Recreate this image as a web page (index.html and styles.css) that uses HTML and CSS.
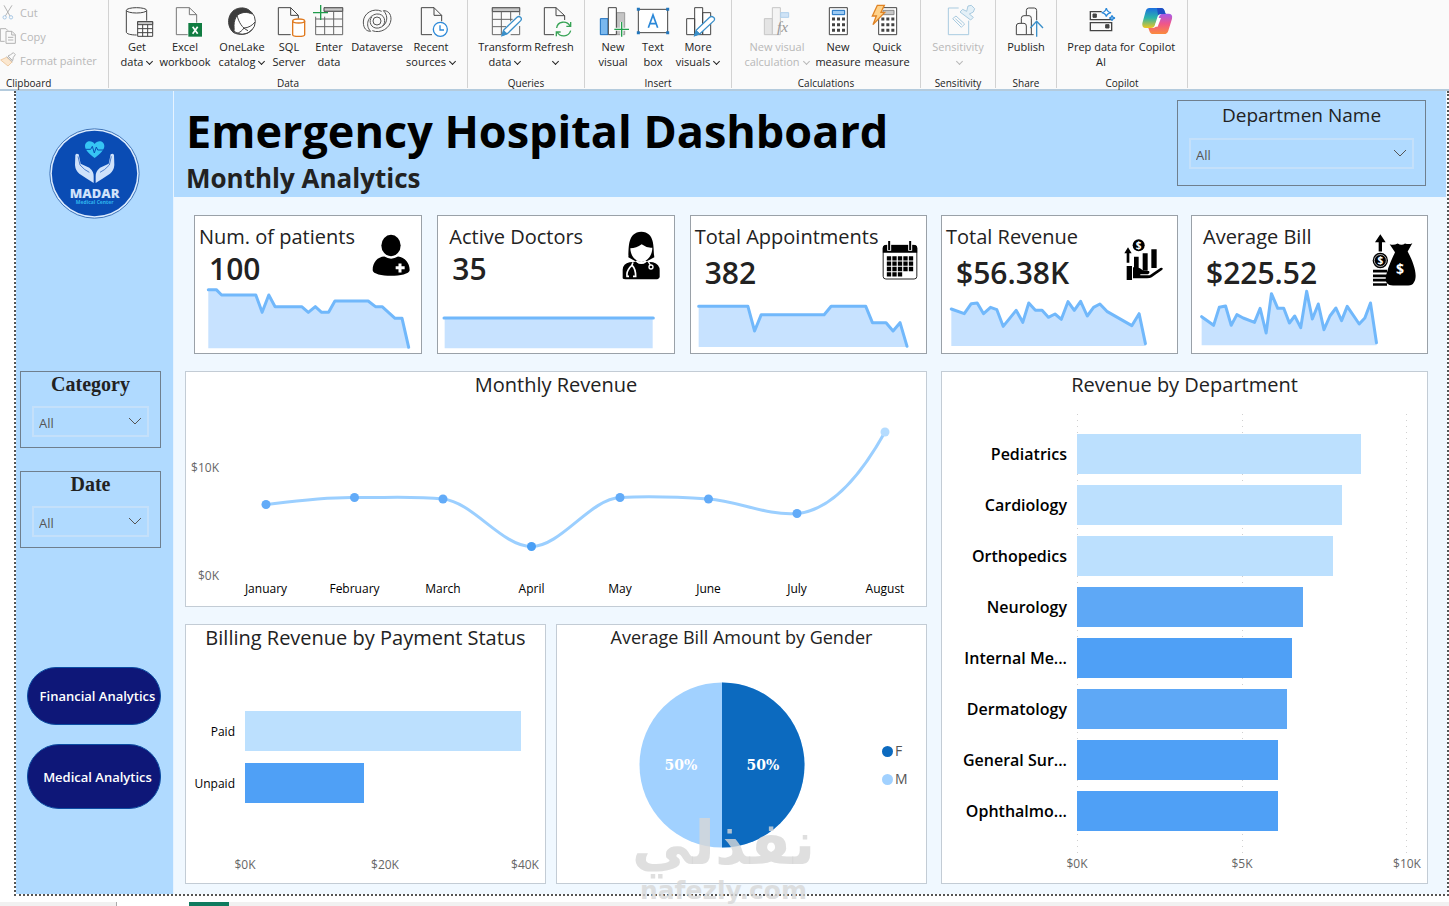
FILE: index.html
```html
<!DOCTYPE html>
<html lang="en">
<head>
<meta charset="utf-8">
<meta name="viewport" content="width=device-width, initial-scale=1">
<title>Emergency Hospital Dashboard</title>
<link rel="stylesheet" href="styles.css">
</head>
<body>
<nav class="ribbon" aria-label="Ribbon">
  <section class="group group--clip">
    <div class="clip-list">
      <button class="clip" disabled><svg class="clip-icon" viewBox="0 12 48 48"><path d="M12 16 30 48M36 16 16 48" stroke="#b3b3b3" stroke-width="3"/><circle cx="14" cy="52" r="5" stroke="#a9c9e6" stroke-width="3"/><circle cx="33" cy="52" r="5" stroke="#a9c9e6" stroke-width="3"/></svg>Cut</button>
      <button class="clip" disabled><svg class="clip-icon" viewBox="0 84 48 48"><path d="M14 124H1V86H18L24 92M18 94H36L46 104V130H18ZM35 94V105H46M24 112H40M24 120H40" stroke="#b3b3b3" stroke-width="3"/></svg>Copy</button>
      <button class="clip" disabled><svg class="clip-icon" viewBox="0 156 48 48"><path d="M2 180 20 172 36 186 24 198Z" fill="#fbe7cf" stroke="#eecba4" stroke-width="3"/><path d="M20 170 38 186M24 168 32 164 40 158 46 164 40 172 38 182Z" stroke="#b3b3b3" stroke-width="3"/></svg>Format painter</button>
    </div>
    <h2 class="group-name group-name--left">Clipboard</h2>
  </section>

  <section class="group">
    <div class="tools">
      <button class="tool w38"><svg class="tool-icon" viewBox="363 18 96 96"><path d="M379 32V96C379 102 393 105 410 105M440 32V62" /><ellipse cx="409.500" cy="31" rx="30.500" ry="8"/><path d="M413 65H458V109H413Z" fill="#fff"/><path d="M413 65H458V74H413Z" fill="#c8c8c8"/><path d="M413 86H458M413 98H458M428 74V109M443 74V109"/></svg><span>Get<br>data<i class="caret"></i></span></button>
      <button class="tool w58"><svg class="tool-icon" viewBox="507 18 96 96"><path d="M563 104H529V23H568L590 44V68M568 23V44H590" stroke="#777"/><path d="M565 69H606V110H565Z" fill="#107c41" stroke="none"/><path d="M578 80 593 101M593 80 578 101" stroke="#fff" stroke-width="5"/></svg><span>Excel<br>workbook</span></button>
      <button class="tool w56"><svg class="tool-icon" viewBox="678 18 96 96"><circle cx="727" cy="64" r="39" fill="#fff"/><path d="M712 26C684 34 676 76 700 97C704 90 702 84 702 76C702 64 706 54 712 46C728 34 742 36 757 42C748 26 730 20 712 26Z" fill="#3c3c3c"/><path d="M700 97C716 104 726 92 732 84C744 84 758 76 765 66M711 46C716 66 726 84 744 92M700 97C718 108 744 104 756 88"/></svg><span>OneLake<br>catalog<i class="caret"></i></span></button>
      <button class="tool w38"><svg class="tool-icon" viewBox="819 18 96 96"><path d="M872 104H835V23H872L895 46V56M872 23V46H895"/><path d="M878 63V104C878 111 914 111 914 104V63" fill="#fff" stroke="#e07a1f" stroke-width="4"/><ellipse cx="896" cy="63" rx="18" ry="6" fill="#fff" stroke="#e07a1f" stroke-width="4"/></svg><span>SQL<br>Server</span></button>
      <button class="tool w42"><svg class="tool-icon" viewBox="939 18 96 96"><path d="M972 23H1028V34H972Z" fill="#c8c8c8"/><path d="M974 23H1028V104H947V50M947 57H1028M947 80H1028M974 50V104M1001 34V104M974 34H1028" stroke="#666"/><path d="M939 38H984M962 15V60" stroke="#1f9c4b" stroke-width="4"/></svg><span>Enter<br>data</span></button>
      <button class="tool w54"><svg class="tool-icon" viewBox="1083 18 96 96"><path d="M1145 34C1120 22 1090 40 1090 66C1090 86 1100 94 1112 94C1094 76 1104 46 1130 42C1154 40 1160 66 1148 78M1117 92C1142 102 1172 84 1173 58C1173 40 1164 32 1150 32C1168 48 1162 78 1136 84C1112 88 1104 62 1116 50" stroke="#555"/><circle cx="1131" cy="63" r="12" stroke="#555"/></svg><span>Dataverse</span></button>
      <button class="tool w54"><svg class="tool-icon" viewBox="1245 18 96 96"><path d="M1296 104H1264V23H1302L1325 46V64M1302 23V46H1325"/><circle cx="1321" cy="88" r="21" fill="#fff" stroke="#2b88d8" stroke-width="4"/><path d="M1320 76V90H1332" stroke="#2b88d8" stroke-width="4"/></svg><span>Recent<br>sources<i class="caret"></i></span></button>
    </div>
    <h2 class="group-name">Data</h2>
  </section>

  <section class="group">
    <div class="tools">
      <button class="tool w56"><svg class="tool-icon" viewBox="57 18 96 96"><path d="M67 23H149V35H67Z" fill="#c8c8c8"/><path d="M149 46V23H67V104H94M67 58H128M67 80H108M94 35V104M122 35V64M149 78V104H122" stroke="#666"/><path d="M96 107 101 90 141 52C148 46 158 54 152 62L112 101Z" fill="#fff" stroke="#3a8fc9" stroke-width="4"/><path d="M96 107 101 92 111 101Z" fill="#3a8fc9" stroke="#3a8fc9"/></svg><span>Transform<br>data<i class="caret"></i></span></button>
      <button class="tool w42"><svg class="tool-icon" viewBox="210 18 96 96"><path d="M258 104H229V23H264L290 47V60M264 23V47H290"/><path d="M266 84C268 64 296 60 306 78M308 66V79H295M308 92C302 112 276 112 267 96M265 109V96H278" stroke="#37a355" stroke-width="4"/></svg><span>Refresh<br><i class="caret"></i></span></button>
    </div>
    <h2 class="group-name">Queries</h2>
  </section>

  <section class="group">
    <div class="tools">
      <button class="tool w38"><svg class="tool-icon" viewBox="387 18 96 96"><path d="M397 56H420V104H397Z" fill="#7ab8ee" stroke="#1a6fc0"/><path d="M446 38H470V104H446Z" fill="#c4c4c4" stroke="#999"/><path d="M421 23H445V104H421Z" fill="#fff"/><path d="M439 88H483M461 66V110" stroke="#fafafa" stroke-width="9"/><path d="M439 88H483M461 66V110" stroke="#23a04d" stroke-width="4"/></svg><span>New<br>visual</span></button>
      <button class="tool w42"><svg class="tool-icon" viewBox="507 18 96 96"><path d="M511 28H599V98H511Z" fill="#fff"/><path d="M541 83 555 45 569 83M546 71H564" stroke="#2b88d8" stroke-width="5"/><path d="M511 28h.1M599 28h.1M511 98h.1M599 98h.1" stroke="#2377bd" stroke-width="9" stroke-linecap="square"/></svg><span>Text<br>box</span></button>
      <button class="tool w48"><svg class="tool-icon" viewBox="642 18 96 96"><path d="M656 56H680V104H656ZM680 23H704V104H680ZM704 38H728V104H704Z" fill="#fff"/><path d="M680 107 685 90 725 52C732 46 744 54 738 62L696 101Z" fill="#fff" stroke="#3a8fc9" stroke-width="4"/><path d="M680 107 685 92 695 101Z" fill="#3a8fc9" stroke="#3a8fc9"/></svg><span>More<br>visuals<i class="caret"></i></span></button>
    </div>
    <h2 class="group-name">Insert</h2>
  </section>

  <section class="group">
    <div class="tools">
      <button class="tool w72" disabled><svg class="tool-icon" viewBox="882 18 96 96"><path d="M892 56H916V104H892Z" fill="#e4e4e4" stroke="#c6c6c6"/><path d="M916 23H940V104H916Z" fill="#f4f4f4" stroke="#c6c6c6"/><path d="M941 38H965V52H941Z" fill="#cfe3f6" stroke="#b0d0ec"/><text x="930" y="95" class="fx">fx</text></svg><span>New visual<br>calculation<i class="caret"></i></span></button>
      <button class="tool w50"><svg class="tool-icon" viewBox="1065 18 96 96"><path d="M1087 23H1141V104H1087Z" fill="#fff"/><path d="M1096 31H1133V44H1096Z" fill="#9bc9f2" stroke="#1a6fc0"/><path d="M1095 57H1137M1095 74H1137M1095 91H1137" stroke-width="9" stroke-dasharray="9 6"/></svg><span>New<br>measure</span></button>
      <button class="tool w48"><svg class="tool-icon" viewBox="1212 18 96 96"><path d="M1235 23H1289V104H1235Z" fill="#fff"/><path d="M1248 31H1281V44H1248Z" fill="#c8c8c8" stroke="#888"/><path d="M1243 57H1285M1243 74H1285M1243 91H1285" stroke-width="9" stroke-dasharray="9 6"/><path d="M1231 16H1252L1242 37H1253L1218 74 1228 48H1216Z" fill="#ffd28a" stroke="#e08324" stroke-width="4"/></svg><span>Quick<br>measure</span></button>
    </div>
    <h2 class="group-name">Calculations</h2>
  </section>

  <section class="group">
    <div class="tools">
      <button class="tool w56" disabled><svg class="tool-icon" viewBox="102 18 96 96"><path d="M152 24H121V104H182V62M134 56 144 48 170 72 160 82ZM142 56 162 74" stroke="#a9cbe0"/><path d="M156 36 164 28 176 34 180 18 190 16 200 26 196 36 184 42 196 52 188 60Z" fill="#e4f0f7" stroke="#a9cbe0"/></svg><span>Sensitivity<br><i class="caret"></i></span></button>
    </div>
    <h2 class="group-name">Sensitivity</h2>
  </section>

  <section class="group">
    <div class="tools">
      <button class="tool w42"><svg class="tool-icon" viewBox="303 18 96 96"><path d="M352 46V32Q352 24 359 24H376Q383 24 383 32V60M337 70V55Q337 47 345 47H360Q367 47 367 55V104M322 104V78Q322 70 330 70H345Q352 70 352 78V104ZM352 104H374"/><path d="M383 110V66M364 84 383 64 402 84" stroke="#3a8fc9" stroke-width="4"/></svg><span>Publish</span></button>
    </div>
    <h2 class="group-name">Share</h2>
  </section>

  <section class="group">
    <div class="tools">
      <button class="tool w70"><svg class="tool-icon" viewBox="528 18 96 96"><path d="M578 35H544V59H608V56M544 68H608V92H544Z" stroke-width="4"/><path d="M552 42H562V52H552ZM590 74H600V84H590Z" fill="#444"/><path d="M592 24Q594 36 606 38Q594 40 592 50Q590 40 578 38Q590 36 592 24ZM609 46Q610 53 618 54Q610 55 609 62Q608 55 601 54Q608 53 609 46Z" stroke="#2b88d8" stroke-width="4" fill="#fff"/></svg><span>Prep data for<br>AI</span></button>
      <button class="tool w42"><svg class="tool-icon" viewBox="702 18 96 96">
        <defs><linearGradient id="cpA" x1="0" y1="0" x2="0" y2="1"><stop offset="0" stop-color="#1b6fe0"/><stop offset=".5" stop-color="#2bb5a8"/><stop offset="1" stop-color="#f2c51f"/></linearGradient><linearGradient id="cpB" x1="0" y1="0" x2="0" y2="1"><stop offset="0" stop-color="#a55bea"/><stop offset=".5" stop-color="#f0568a"/><stop offset="1" stop-color="#fb8b3c"/></linearGradient></defs>
        <path d="M727 24H762Q770 24 773 34L776 42H762Q754 42 751 52L743 78Q740 84 732 84H716Q704 84 706 70L716 34Q719 24 727 24Z" fill="url(#cpA)" stroke="none"/><path d="M771 102H738Q730 102 727 92L724 84H736Q746 84 749 74L757 48Q760 41 768 41H784Q798 41 795 56L784 92Q781 102 771 102Z" fill="url(#cpB)" stroke="none"/><path d="M753 54H762Q756 70 752 80H742Z" fill="#fff" stroke="none"/><path d="M750 24H762Q770 24 773 34L776 42H762Q756 42 753 46Z" fill="#1f4fc4" stroke="none"/></svg><span>Copilot</span></button>
    </div>
    <h2 class="group-name">Copilot</h2>
  </section>
</nav>

<main class="canvas">
  <aside class="sidebar">
    <svg class="logo" viewBox="147 115 273 273" role="img" aria-label="Madar Medical Center">
      <circle cx="283.500" cy="251.500" r="134" fill="#dcecff" stroke="#3f74b8" stroke-width="3"/>
      <circle cx="283.500" cy="251.500" r="128" fill="#0a4cb4"/>
      <path d="M284 205C268 192 255 182 255 169C255 152 276 150 284 163C292 150 313 152 313 169C313 182 300 192 284 205Z" fill="#36c5f4"/>
      <path d="M257 179H272L277 170 283 190 289 172 293 181H311" fill="none" stroke="#0a4cb4" stroke-width="3"/>
      <g fill="#cfe2fb"><path d="M226 196Q229 189 236 194L242 222 268 234Q282 246 281 260V280L262 268 238 252Q226 242 225 226Z"/><path d="M342 196Q339 189 332 194L326 222 300 234Q286 246 287 260V280L306 268 330 252Q342 242 343 226Z"/></g>
      <path d="M234 200 240 226Q254 242 268 248M334 200 328 226Q314 242 300 248" fill="none" stroke="#0a4cb4" stroke-width="2"/>
      <text x="284" y="325" class="logo-name">MADAR</text>
      <text x="284" y="344" class="logo-sub">Medical Center</text>
    </svg>
    <div class="slicer slicer--first">
      <label class="slicer-title serif" for="category">Category</label>
      <div class="select"><select id="category"><option>All</option></select><svg viewBox="0 0 14 8"><path d="M1 1 7 7 13 1"/></svg></div>
    </div>
    <div class="slicer">
      <label class="slicer-title serif" for="date">Date</label>
      <div class="select"><select id="date"><option>All</option></select><svg viewBox="0 0 14 8"><path d="M1 1 7 7 13 1"/></svg></div>
    </div>
    <div class="links">
      <button class="pill">Financial Analytics</button>
      <button class="pill pill--tall">Medical Analytics</button>
    </div>
  </aside>

  <div class="report">
    <header class="banner">
      <div>
        <h1>Emergency Hospital Dashboard</h1>
        <p class="subtitle">Monthly Analytics</p>
      </div>
      <div class="slicer slicer--wide">
        <label class="slicer-title" for="department">Departmen Name</label>
        <div class="select"><select id="department"><option>All</option></select><svg viewBox="0 0 14 8"><path d="M1 1 7 7 13 1"/></svg></div>
      </div>
    </header>

    <div class="board">
      <div class="kpis kpis--three">
        <article class="kpi">
          <h3>Num. of patients</h3><p>100</p>
          <svg class="kpi-icon" width="38" height="43" viewBox="1117 428 114 128"><ellipse cx="1174" cy="462" rx="29" ry="32"/><path d="M1119 536C1119 512 1134 496 1154 495Q1174 508 1195 495C1216 498 1230 514 1230 536C1228 558 1120 558 1119 536Z"/><path d="M1201 516V543M1188 529H1215" stroke="#fff" stroke-width="9"/></svg>
          <svg class="spark" viewBox="584 589 681 198" preserveAspectRatio="none"><path class="area" d="M624 597H648L664 613H767L786 665 806 613 825 648H905L925 665 946 648 965 665H986L1005 631H1105L1127 648H1147L1186 683H1207L1227 773H624Z"/><path class="line" d="M624 597H648L664 613H767L786 665 806 613 825 648H905L925 665 946 648 965 665H986L1005 631H1105L1127 648H1147L1186 683H1207L1227 770"/></svg>
        </article>
        <article class="kpi kpi--inset">
          <h3>Active Doctors</h3><p>35</p>
          <svg class="kpi-icon kpi-icon--in" width="38" height="49" viewBox="569 98 114 147"><path d="M588 177C590 150 584 102 627 100C670 102 662 150 666 177L652 184 640 190H612Z"/><path d="M594 150Q612 150 628 138Q644 150 660 148C660 172 644 190 627 191C610 190 594 172 594 150Z" fill="#fff"/><path d="M571 240V214Q572 196 592 192L612 190Q627 204 642 190L662 192Q682 198 682 216V236Q680 243 670 243H580Q572 243 571 240Z"/><path d="M612 188Q627 200 642 188" fill="none" stroke="#fff" stroke-width="5"/><path d="M602 192Q600 202 592 208Q582 220 584 234H590M600 202Q610 212 610 234H602" fill="none" stroke="#fff" stroke-width="5"/><path d="M648 190 654 200" stroke="#fff" stroke-width="4"/><circle cx="656" cy="206" r="6" fill="none" stroke="#fff" stroke-width="4"/></svg>
          <svg class="spark" viewBox="24 261 706 198" preserveAspectRatio="none"><path class="area" d="M44 354H668V445H44Z"/><path class="line" d="M42 354H670"/></svg>
        </article>
        <article class="kpi kpi--roomy">
          <h3>Total Appointments</h3><p>382</p>
          <svg class="kpi-icon kpi-icon--edge" width="36" height="39" viewBox="1358 121 107 117"><rect x="1361" y="134" width="101" height="101" rx="8" fill="#fff" stroke="#222" stroke-width="3"/><path d="M1360 156V142Q1360 133 1370 133H1454Q1463 133 1463 142V156Z"/><path d="M1372 173H1451M1372 189H1451M1372 205H1451M1372 221H1418" fill="none" stroke="#000" stroke-width="13" stroke-dasharray="13 3.500"/><path d="M1379 122V150M1442 122V150" stroke="#fff" stroke-width="12"/><path d="M1379 121V148M1442 121V148" stroke="#000" stroke-width="6"/></svg>
          <svg class="spark" viewBox="782 294 707 171" preserveAspectRatio="none"><path class="area" d="M805 325H953L973 399 993 350H1182L1203 325H1307L1327 374H1368L1389 399 1410 374 1431 447H805Z"/><path class="line" d="M805 325H953L973 399 993 350H1182L1203 325H1307L1327 374H1368L1389 399 1410 374 1431 445"/></svg>
        </article>
      </div>

      <div class="kpis kpis--two">
        <article class="kpi kpi--roomy">
          <h3>Total Revenue</h3><p>$56.38K</p>
          <svg class="kpi-icon kpi-icon--in" width="39" height="42" viewBox="585 453 117 126"><circle cx="629" cy="472" r="18"/><text x="629" y="483" class="coin">$</text><path d="M597 478 586 496H593V524H601V496H608ZM615 506H629V544H615ZM641 496H656V548H641ZM667 484H683V540H667ZM593 534H609V576H593ZM612 538C630 534 636 544 644 549H660Q664 556 656 559H634V562H662L694 540Q704 538 700 545L668 568Q664 571 654 571H612Z"/></svg>
          <svg class="spark" viewBox="32 624 707 171" preserveAspectRatio="none"><path class="area" d="M60 663 99 677 120 647 138 645 157 677 178 658 197 665 216 715 255 667 275 703 293 645 313 667 333 667 352 688 372 678 391 694 411 641 430 667 449 640 469 684 488 658 507 648 528 670 603 713 625 677 644 774H60Z"/><path class="line" d="M60 663 99 677 120 647 138 645 157 677 178 658 197 665 216 715 255 667 275 703 293 645 313 667 333 667 352 688 372 678 391 694 411 641 430 667 449 640 469 684 488 658 507 648 528 670 603 713 625 677 644 767"/></svg>
        </article>
        <article class="kpi kpi--roomy kpi--inset">
          <h3>Average Bill</h3><p>$225.52</p>
          <svg class="kpi-icon" width="44" height="52" viewBox="1325 448 132 155"><path d="M1350 448 1334 472H1345V500H1355V472H1366Z"/><circle cx="1350" cy="527" r="23"/><circle cx="1350" cy="527" r="18" fill="none" stroke="#fff" stroke-width="2"/><text x="1350" y="538" class="coin">$</text><path d="M1328 559H1370M1328 573H1370M1328 586H1370M1328 599H1370" stroke="#000" stroke-width="8"/><path d="M1378 478Q1390 482 1402 476Q1414 484 1424 476Q1436 480 1446 475L1432 500C1446 526 1466 572 1450 594Q1446 602 1434 602H1388C1362 602 1364 580 1370 562C1376 540 1386 520 1394 502Z"/><text x="1409" y="569" class="coin coin--big">$</text></svg>
          <svg class="spark" viewBox="782 624 707 171" preserveAspectRatio="none"><path class="area" d="M811 686 847 712 864 658 883 654 900 712 917 680 936 690 970 703 987 661 1005 735 1021 617 1040 661 1058 661 1075 705 1091 684 1109 719 1127 610 1144 693 1162 648 1179 725 1197 684 1215 660 1232 698 1249 655 1285 708 1302 690 1319 645 1337 772H811Z"/><path class="line" d="M811 686 847 712 864 658 883 654 900 712 917 680 936 690 970 703 987 661 1005 735 1021 617 1040 661 1058 661 1075 705 1091 684 1109 719 1127 610 1144 693 1162 648 1179 725 1197 684 1215 660 1232 698 1249 655 1285 708 1302 690 1319 645 1337 764"/></svg>
        </article>
      </div>

      <section class="panel">
        <h3>Monthly Revenue</h3>
        <svg class="chart" viewBox="186 398 740 208">
          <g class="tick"><text x="219" y="472" text-anchor="end">$10K</text><text x="219" y="580" text-anchor="end">$0K</text></g>
          <path class="trend" d="M266 504.500C295 501 325 497 354.500 497.500C384 498 413 496 443 499C473 502 502 546.500 531.500 546.500C561 546.500 590 499 620 497.500C650 496 679 497 708.500 499C738 501 767 516 797 513.500C827 511 856 484 885 432"/>
          <g fill="#62abf8"><circle cx="266" cy="504.500" r="4.500"/><circle cx="354.500" cy="497.500" r="4.500"/><circle cx="443" cy="499" r="4.500"/><circle cx="531.500" cy="546.500" r="4.500" fill="#4a9ff5"/><circle cx="620" cy="497.500" r="4.500"/><circle cx="708.500" cy="499" r="4.500"/><circle cx="797" cy="513.500" r="4.500"/><circle cx="885" cy="432" r="4.500" fill="#b5dcff"/></g>
          <g class="month"><text x="266" y="593">January</text><text x="354.500" y="593">February</text><text x="443" y="593">March</text><text x="531.500" y="593">April</text><text x="620" y="593">May</text><text x="708.500" y="593">June</text><text x="797" y="593">July</text><text x="885" y="593">August</text></g>
        </svg>
      </section>

      <section class="panel panel--dept">
        <h3>Revenue by Department</h3>
        <div class="bars bars--dept">
          <div class="grid-lines"><i></i><i></i><i></i></div>
          <div class="bar-row"><span>Pediatrics</span><div class="track"><div class="bar bar--light" style="width:86.100%"></div></div></div>
          <div class="bar-row"><span>Cardiology</span><div class="track"><div class="bar bar--light" style="width:80.300%"></div></div></div>
          <div class="bar-row"><span>Orthopedics</span><div class="track"><div class="bar bar--light" style="width:77.600%"></div></div></div>
          <div class="bar-row"><span>Neurology</span><div class="track"><div class="bar bar--mid" style="width:68.500%"></div></div></div>
          <div class="bar-row"><span>Internal Me...</span><div class="track"><div class="bar" style="width:65%"></div></div></div>
          <div class="bar-row"><span>Dermatology</span><div class="track"><div class="bar bar--mid" style="width:63.700%"></div></div></div>
          <div class="bar-row"><span>General Sur...</span><div class="track"><div class="bar" style="width:60.900%"></div></div></div>
          <div class="bar-row"><span>Ophthalmo...</span><div class="track"><div class="bar" style="width:60.900%"></div></div></div>
        </div>
        <div class="axis axis--dept"><span>$0K</span><span>$5K</span><span>$10K</span></div>
      </section>

      <div class="pair">
        <section class="panel">
          <h3>Billing Revenue by Payment Status</h3>
          <div class="bars bars--bill">
            <div class="bar-row"><span>Paid</span><div class="track"><div class="bar bar--light" style="width:98.500%"></div></div></div>
            <div class="bar-row"><span>Unpaid</span><div class="track"><div class="bar" style="width:42.500%"></div></div></div>
          </div>
          <div class="axis axis--bill"><span>$0K</span><span>$20K</span><span>$40K</span></div>
        </section>
        <section class="panel">
          <h3 class="small">Average Bill Amount by Gender</h3>
          <div class="pie-area">
            <svg class="pie" viewBox="0 0 166 166"><circle cx="83" cy="83" r="82.500" fill="#a1d1ff"/><path d="M83 .5A82.500 82.500 0 0 1 83 165.500Z" fill="#0c6abf"/><text x="42" y="88">50%</text><text x="124" y="88">50%</text></svg>
            <ul class="legend"><li>F</li><li class="light">M</li></ul>
          </div>
        </section>
      </div>
    </div>
  </div>
  <div class="watermark"><span class="mark-ar" lang="ar" dir="rtl">نفذلي</span><span>nafezly.com</span></div>
</main>
<footer class="tabs"><i class="tab"></i><i class="tab-add"></i></footer>
</body>
</html>
```
FILE: styles.css
```css
* { box-sizing: border-box; }
body { margin: 0; background: #fff; font-family: "Open Sans", "Noto Sans", sans-serif; color: #222; overflow-x: hidden; }
h1, h2, h3, p, ul { margin: 0; padding: 0; font-weight: 400; }
button, select { font: inherit; color: inherit; background: none; border: 0; padding: 0; margin: 0; }

/* Ribbon */
.ribbon { display: flex; height: 91px; background: #fafafa; border-bottom: 2px solid #b4cbdd; }
.group { display: flex; flex-direction: column; justify-content: space-between; padding: 0 9px; border-right: 1px solid #d2d2d2; margin-bottom: 1px; }
.group--clip { width: 109px; padding: 0; }
.group-name { font-size: 10px; line-height: 10px; text-align: center; color: #222; }
.group-name--left { text-align: left; padding-left: 6px; }
.tools { display: flex; }
.tool { display: flex; flex-direction: column; align-items: center; padding-top: 6px; font-size: 11px; line-height: 15px; color: #222; white-space: nowrap; }
.tool:disabled, .clip:disabled { color: #b8b8b8; }
.tool > span { display: block; padding-top: 1px; text-align: center; }
.tool-icon { width: 32px; height: 32px; overflow: visible; fill: none; stroke: #444; stroke-width: 3; }
.fx { font: italic 46px "Liberation Serif", serif; fill: #999; stroke: none; }
.w38 { width: 38px; } .w42 { width: 42px; }
.w48 { width: 48px; } .w50 { width: 50px; } .w54 { width: 54px; } .w56 { width: 56px; }
.w58 { width: 58px; } .w70 { width: 70px; } .w72 { width: 72px; }
.caret { display: inline-block; width: 5px; height: 5px; margin: 0 1px 2px 4px; border: solid; border-width: 0 1px 1px 0; transform: rotate(45deg); }
.clip-list { display: flex; flex-direction: column; }
.clip { display: flex; align-items: center; gap: 4px; height: 24px; font-size: 11px; white-space: nowrap; }
.clip-icon { width: 16px; height: 16px; fill: none; }

/* Report canvas */
.canvas { position: relative; display: flex; margin: 0 0 0 14px; border: 2px dotted #555; border-top: 0; }
.sidebar { display: flex; flex-direction: column; align-items: center; width: 157px; flex: none; padding: 37px 12px 0 4px; background: #b0daff; }
.logo { width: 91px; height: 91px; margin-left: 8px; }
.logo-name { font: 800 39px "Open Sans", sans-serif; fill: #cfe2fb; text-anchor: middle; }
.logo-sub { font: 700 15px "Open Sans", sans-serif; fill: #2fb4ee; text-anchor: middle; }
.slicer { align-self: stretch; height: 77px; padding: 0 11px 10px; border: 1px solid #6f7f8e; margin-bottom: 23px; }
.slicer--first { margin-top: 152px; }
.slicer-title { display: block; text-align: center; font-size: 19px; line-height: 28px; margin-bottom: 9px; font-weight: 500; }
.slicer-title.serif { font: 700 20px/24px "Liberation Serif", serif; margin-bottom: 10px; }
.select { position: relative; }
.select select { appearance: none; width: 100%; height: 31px; padding: 2px 5px 0; border: 2px solid #c4e0fa; border-radius: 0; font-size: 13px; color: #555; }
.select svg { position: absolute; right: 7px; top: 11px; width: 14px; height: 8px; fill: none; stroke: #555; pointer-events: none; }
.links { align-self: stretch; display: grid; gap: 19px; margin-top: 96px; padding-left: 7px; }
.pill { height: 58px; border: 1px solid #0c4da3; border-radius: 32px; background: #0e1778; color: #fff; font-size: 13px; font-weight: 600; white-space: nowrap; padding-left: 7px; }
.pill--tall { height: 65px; }

.report { flex: 1; min-width: 0; background: #f0f8ff; border-left: 1px solid #e6f3ff; }
.banner { display: flex; justify-content: space-between; align-items: flex-start; height: 106px; padding: 9px 20px 0 12px; margin-right: 1px; background: #b0daff; }
h1 { font-size: 45px; font-weight: 700; line-height: 62px; color: #000; white-space: nowrap; }
.subtitle { font-size: 26px; font-weight: 700; line-height: 32px; }
.slicer--wide { width: 249px; height: 86px; }
.board { display: grid; grid-template-columns: 742fr 487fr; column-gap: 14px; row-gap: 17px; padding: 18px 19px 10px 11px; }

/* KPI cards */
.kpis { display: grid; }
.kpis--three { grid-template-columns: 228fr 237fr 237fr; gap: 15px; padding-left: 9px; }
.kpis--two { grid-template-columns: 1fr 1fr; gap: 13px; }
.kpi { display: grid; grid-template: 26px 37px 66px / 1fr auto; height: 139px; padding-top: 8px; background: #fff; border: 1px solid #9aa1a8; min-width: 0; }
.kpi--roomy { grid-template-rows: 26px 46px 57px; }
.kpi h3 { padding-left: 4px; font-size: 20px; line-height: 26px; font-weight: 500; white-space: nowrap; }
.kpi--inset h3 { padding-left: 11px; }
.kpi p { padding-left: 14px; grid-column: 1; font-size: 30px; font-weight: 600; line-height: 36px; align-self: center; }
.kpi-icon { grid-column: 2; grid-row: 1 / 3; align-self: center; margin-right: 11px; overflow: visible; }
.kpi-icon--in { margin-right: 14px; }
.kpi-icon--edge { margin-right: 8px; }
.spark { grid-column: 1 / 3; width: 100%; height: 100%; overflow: visible; }
.area { fill: #c7e2ff; }
.line { fill: none; stroke: #71b8fb; stroke-width: 3px; vector-effect: non-scaling-stroke; stroke-linejoin: round; stroke-linecap: round; }
.coin { font: 700 30px "Open Sans", sans-serif; fill: #fff; text-anchor: middle; }
.coin--big { font-size: 42px; }

/* Charts */
.panel { background: #fff; border: 1px solid #c3ccd5; min-width: 0; display: flex; flex-direction: column; }
.panel h3 { font-size: 20px; line-height: 26px; text-align: center; white-space: nowrap; font-weight: 400; }
.panel h3.small { font-size: 18px; line-height: 24px; }
.panel--dept { grid-row: 2 / 4; grid-column: 2; }
.chart { display: block; width: 100%; }
.tick, .axis { font-size: 12px; fill: #666; color: #666; }
.month { font-size: 12px; fill: #000; text-anchor: middle; }
.trend { fill: none; stroke: #9bcfff; stroke-width: 3; }
.pair { display: grid; grid-template-columns: 361fr 371fr; gap: 10px; height: 260px; }
.bars { position: relative; display: grid; }
.bar-row { display: grid; align-items: center; }
.bar { height: 40px; background: #4fa0f6; }
.bar--mid { background: #5ea8f6; }
.bar--light { background: #bce0fe; }
.bars--dept { margin-top: 16px; padding: 20px 20px 22px 0; gap: 11px; }
.bars--dept .bar-row { grid-template-columns: 135px 1fr; }
.bar-row span { text-align: right; padding-right: 10px; }
.bars--dept span { font-size: 16px; line-height: 22px; font-weight: 600; color: #000; }
.track { position: relative; }
.grid-lines { position: absolute; top: 0; bottom: 0; left: 135px; right: 20px; display: flex; justify-content: space-between; }
.grid-lines i { width: 1px; background: repeating-linear-gradient(#d0d0d0 0 1px, transparent 1px 6px); }
.bars--bill { margin-top: 60px; gap: 12px; padding-right: 20px; }
.bars--bill .bar-row { grid-template-columns: 59px 1fr; }
.bars--bill span { font-size: 12px; color: #000; }
.axis { display: flex; justify-content: space-between; line-height: 16px; }
.axis span { width: 40px; text-align: center; }
.axis--dept { padding: 0 0 0 115px; margin-top: 3px; }
.axis--bill { padding-left: 39px; margin-top: 54px; }
.pie-area { display: grid; grid-template-columns: 166px 1fr; align-items: center; padding: 33px 0 0 82px; }
.pie text { font: 700 14px "DejaVu Serif", serif; fill: #fff; text-anchor: middle; }
.legend { list-style: none; padding-left: 77px; font-size: 14px; line-height: 28px; color: #555; }
.legend li { display: flex; align-items: center; gap: 2px; }
.legend li::before { content: ""; width: 11px; height: 11px; border-radius: 50%; background: #0c6abf; }
.legend .light::before { background: #a1d1ff; }

.watermark { position: absolute; left: 50%; bottom: -10px; width: 180px; margin-left: -98px; display: flex; flex-direction: column; align-items: center; color: rgba(215, 215, 215, .8); font: 700 25px/26px "DejaVu Sans", sans-serif; pointer-events: none; }
.mark-ar { font-size: 60px; line-height: 70px; }
.tabs { display: flex; height: 4px; margin-top: 6px; padding-left: 116px; background: #f1f1f1; }
.tab { width: 73px; background: #fff; border-left: 1px solid #aaa; }
.tab-add { width: 40px; background: #0f7b5f; }
```
